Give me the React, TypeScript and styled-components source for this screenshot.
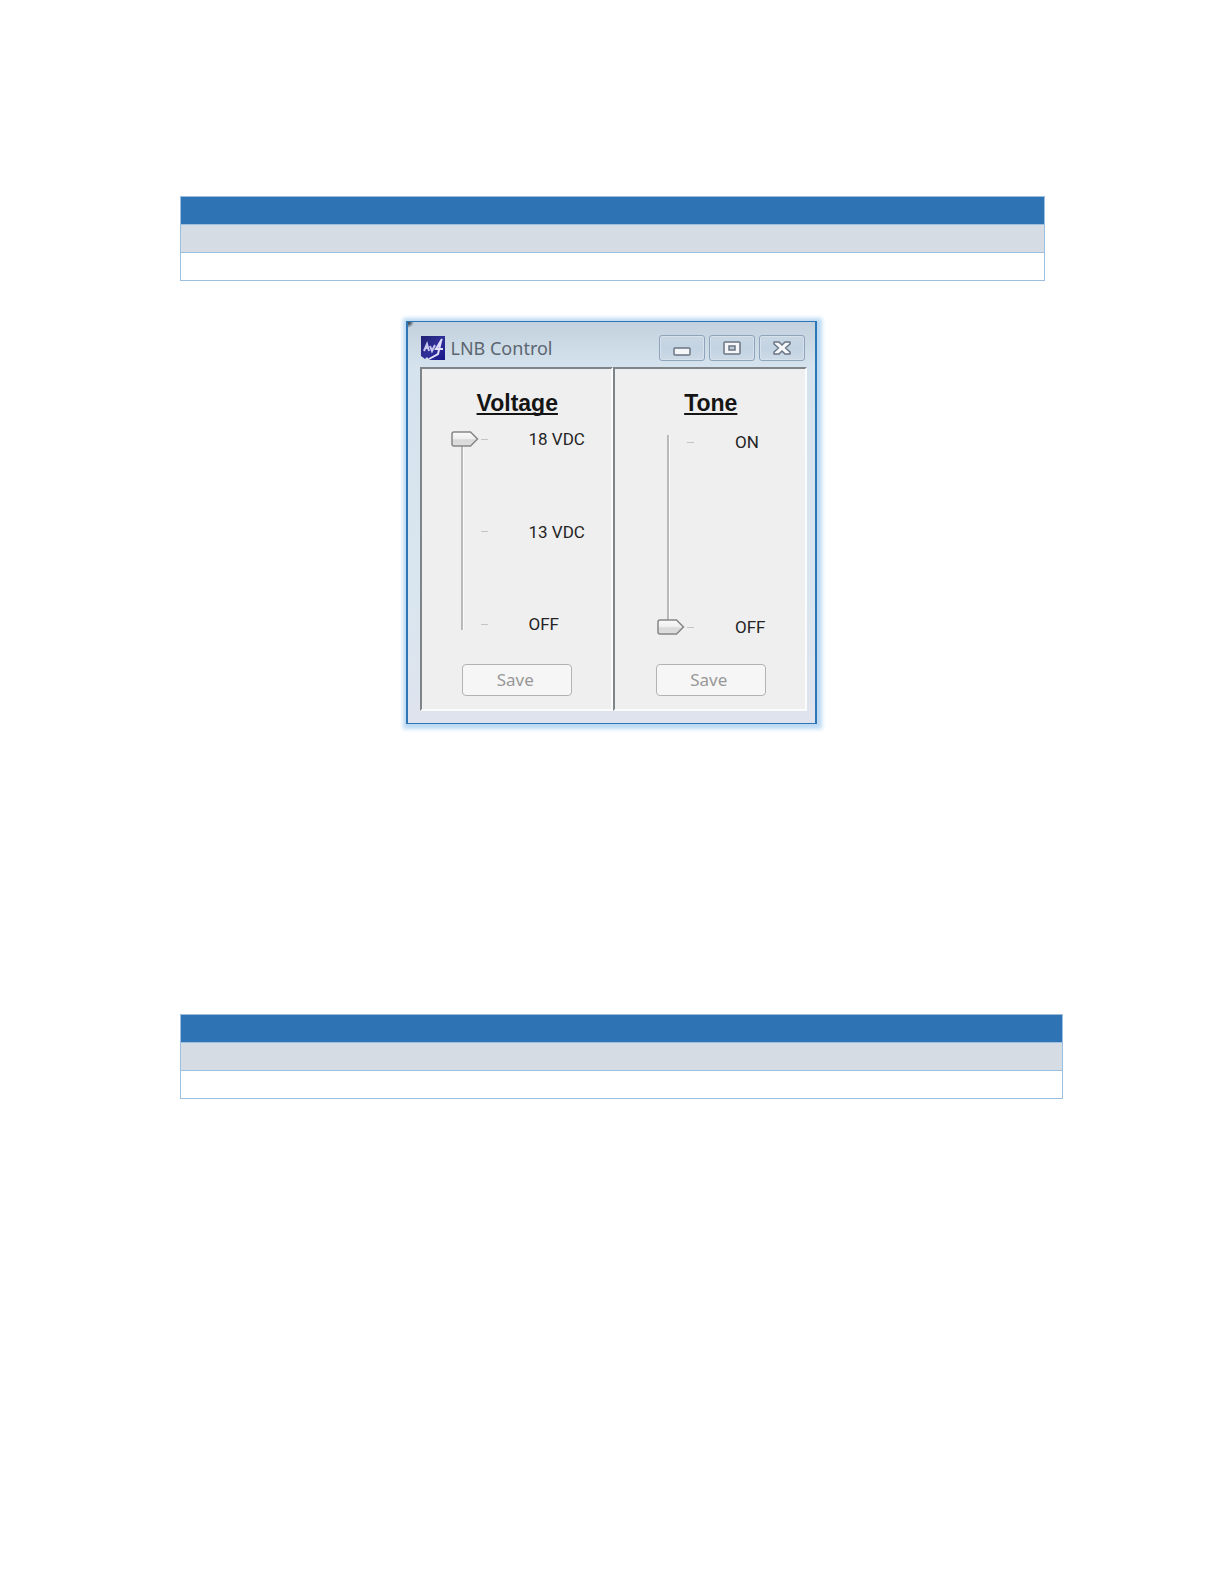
import React, { useId, useState } from "react";
import styled, { createGlobalStyle } from "styled-components";

const GlobalStyle = createGlobalStyle`
  *, *::before, *::after { box-sizing: border-box; }
  body { margin: 0; background: #ffffff; font-family: Roboto, "Noto Sans", sans-serif; }
`;

const Page = styled.main`
  display: flex;
  flex-direction: column;
  min-height: 100vh;
  padding: 196px 0 80px;
`;

const TableBlock = styled.section`
  padding: 0 161px 0 180px;
`;

const BandedTable = styled.table<{ $width: string }>`
  width: ${(p) => p.$width};
  border-collapse: collapse;
  border: 1px solid #9cbfe0;

  th, td {
    height: 28px;
    padding: 0;
    border-bottom: 1px solid #9cbfe0;
  }
  th { background: #2e74b5; }
  tbody tr:first-child td { background: #d6dce4; }
`;

const DialogBlock = styled.section`
  display: flex;
  justify-content: center;
  padding: 40px 18px 290px 16px;
`;

const Dialog = styled.div`
  width: 411px;
  max-width: 100%;
  padding: 0 8px 12px 12px;
  border: solid #2e75b6;
  border-width: 1px 2px;
  background:
    radial-gradient(circle at 0 0, #4a5560 0, #4a5560 2px, transparent 6px),
    linear-gradient(#c2d1dd 0, #d5e3ee 45px, #dae6ef 70%, #dfe3ee 100%);
  box-shadow: 1px 1px 4px 4px #bcdaf3;
`;

const TitleBar = styled.header`
  display: flex;
  align-items: center;
  height: 45px;
  padding: 6px 2px 0 1px;
`;

const AppIcon = styled.svg`
  width: 24px;
  height: 24px;
  margin-right: 6px;
`;

const Title = styled.h1`
  flex: 1;
  margin: 0;
  color: #5c6670;
  font: 400 18px/24px "Noto Sans", "Open Sans", sans-serif;
`;

const Controls = styled.div`
  display: flex;
  gap: 4px;
`;

const ControlButton = styled.button`
  display: grid;
  place-items: center;
  width: 46px;
  height: 26px;
  padding: 0;
  border: 1px solid #8fa3ba;
  border-radius: 3px;
  background: linear-gradient(#c9d7e4, #c3d3e2 50%, #cddae7);
  box-shadow: inset 0 0 0 1px #d6e1eb;
`;

const Panels = styled.div`
  display: grid;
  grid-template-columns: 1fr 1fr;
`;

const Panel = styled.section`
  display: flex;
  flex-direction: column;
  align-items: center;
  padding: 20px 0 13px 2px;
  border: 2px solid #fafbfc;
  border-top-color: #7f8489;
  border-left-color: #7f8489;
  background: #efefef;
`;

const PanelTitle = styled.label`
  color: #151515;
  font: 700 23px/28px "Liberation Sans", Arial, sans-serif;
  text-decoration: underline 2px;
  text-decoration-skip-ink: none;
  text-underline-offset: 2px;
`;

const SliderRow = styled.div<{ $top: number; $left: number }>`
  display: flex;
  align-self: stretch;
  height: 247px;
  padding: ${(p) => p.$top}px 0 0 ${(p) => p.$left}px;
`;

const thumb = `url("data:image/svg+xml,%3Csvg xmlns='http://www.w3.org/2000/svg' width='28' height='16'%3E%3Cdefs%3E%3ClinearGradient id='g' x2='0' y2='1'%3E%3Cstop stop-color='%23fafafa'/%3E%3Cstop offset='.5' stop-color='%23eeeeee'/%3E%3Cstop offset='.55' stop-color='%23d9d9d9'/%3E%3Cstop offset='1' stop-color='%23dedede'/%3E%3C/linearGradient%3E%3C/defs%3E%3Cpath d='M3 1H19.500L26.500 8L19.500 15H3Q1 15 1 13V3Q1 1 3 1Z' fill='url(%23g)' stroke='%23868686' stroke-width='1.500'/%3E%3C/svg%3E")`;

const Slider = styled.input`
  appearance: none;
  writing-mode: vertical-lr;
  direction: rtl;
  width: 28px;
  height: 201px;
  margin: 0;
  background:
    linear-gradient(#b9b9b9, #b9b9b9) 10px 1px / 2px 198px no-repeat,
    linear-gradient(#fafafa, #fafafa) 12px 1px / 1px 198px no-repeat;

  &::-webkit-slider-thumb {
    appearance: none;
    width: 28px;
    height: 16px;
    border: 0;
    background: ${thumb} no-repeat;
  }
`;

const Scale = styled.ul`
  display: flex;
  flex-direction: column;
  justify-content: space-between;
  height: 201px;
  margin: 0 0 0 2px;
  padding: 0;
  list-style: none;
`;

const Mark = styled.li`
  display: flex;
  align-items: center;
  gap: 41px;
  color: #242424;
  font-size: 17px;
  line-height: 16px;

  &::before {
    content: "";
    width: 7px;
    height: 1px;
    background: #c4c4c4;
  }
`;

const SaveButton = styled.button`
  width: 110px;
  height: 32px;
  padding: 0 4px 0 0;
  border: 1px solid #b3b3b3;
  border-radius: 4px;
  background: #f6f6f6;
  color: #989898;
  font: 400 17px/24px "Noto Sans", "Open Sans", sans-serif;
`;

function EmptyTable({ width, name }: { width: string; name: string }) {
  return (
    <TableBlock>
      <BandedTable $width={width} aria-label={name}>
        <thead>
          <tr><th scope="col" /></tr>
        </thead>
        <tbody>
          <tr><td /></tr>
          <tr><td /></tr>
        </tbody>
      </BandedTable>
    </TableBlock>
  );
}

type ControlPanelProps = {
  title: string;
  marks: string[];
  initial: number;
  top: number;
  left: number;
};

function ControlPanel({ title, marks, initial, top, left }: ControlPanelProps) {
  const id = useId();
  const [value, setValue] = useState(initial);
  return (
    <Panel>
      <PanelTitle htmlFor={id}>{title}</PanelTitle>
      <SliderRow $top={top} $left={left}>
        <Slider
          id={id}
          type="range"
          min={0}
          max={marks.length - 1}
          value={value}
          aria-valuetext={marks[marks.length - 1 - value]}
          onChange={(e) => setValue(Number(e.target.value))}
        />
        <Scale>
          {marks.map((mark) => <Mark key={mark}>{mark}</Mark>)}
        </Scale>
      </SliderRow>
      <SaveButton type="button" disabled>Save</SaveButton>
    </Panel>
  );
}

export default function App() {
  return (
    <>
      <GlobalStyle />
      <Page>
        <EmptyTable width="98%" name="Summary" />
        <DialogBlock>
          <Dialog role="dialog" aria-labelledby="dialog-title">
            <TitleBar>
              <AppIcon viewBox="0 0 24 24" aria-hidden="true">
                <defs>
                  <linearGradient id="icon-fill" x2="1" y2="1">
                    <stop stopColor="#202070" />
                    <stop offset="0.5" stopColor="#30309a" />
                    <stop offset="1" stopColor="#15158a" />
                  </linearGradient>
                </defs>
                <path d="M0 0H24V24H9L6 21L4 23L0 20Z" fill="url(#icon-fill)" />
                <path d="M3 15L6 8L8 15M4 12H8M9 10L11 15L14 9" fill="none" stroke="#c9c8ee" strokeWidth="2" />
                <path d="M21 3L15 13H22M20 5L17 18L8 23" fill="none" stroke="#e2e0fa" strokeWidth="2" />
              </AppIcon>
              <Title id="dialog-title">LNB Control</Title>
              <Controls>
                <ControlButton type="button" aria-label="Minimize">
                  <svg width="18" height="16" viewBox="0 0 18 16">
                    <rect x="1" y="8" width="16" height="7" rx="1" fill="#f5f6f8" stroke="#687482" strokeWidth="1.5" />
                  </svg>
                </ControlButton>
                <ControlButton type="button" aria-label="Maximize">
                  <svg width="18" height="14" viewBox="0 0 18 14">
                    <rect x="1" y="1" width="16" height="12" rx="1" fill="#f5f6f8" stroke="#687482" strokeWidth="1.5" />
                    <rect x="6" y="5" width="6" height="4" fill="#c4ced9" stroke="#687482" strokeWidth="1.5" />
                  </svg>
                </ControlButton>
                <ControlButton type="button" aria-label="Close">
                  <svg width="18" height="14" viewBox="0 0 18 14">
                    <path
                      d="M1 1H6L9 4L12 1H17V3L12.500 7L17 11V13H12L9 10L6 13H1V11L5.500 7L1 3Z"
                      fill="#f5f6f8"
                      stroke="#687482"
                      strokeWidth="1.5"
                      strokeLinejoin="round"
                    />
                  </svg>
                </ControlButton>
              </Controls>
            </TitleBar>
            <Panels>
              <ControlPanel title="Voltage" marks={["18 VDC", "13 VDC", "OFF"]} initial={2} top={14} left={27} />
              <ControlPanel title="Tone" marks={["ON", "OFF"]} initial={0} top={17} left={40} />
            </Panels>
          </Dialog>
        </DialogBlock>
        <EmptyTable width="100%" name="Details" />
      </Page>
    </>
  );
}
